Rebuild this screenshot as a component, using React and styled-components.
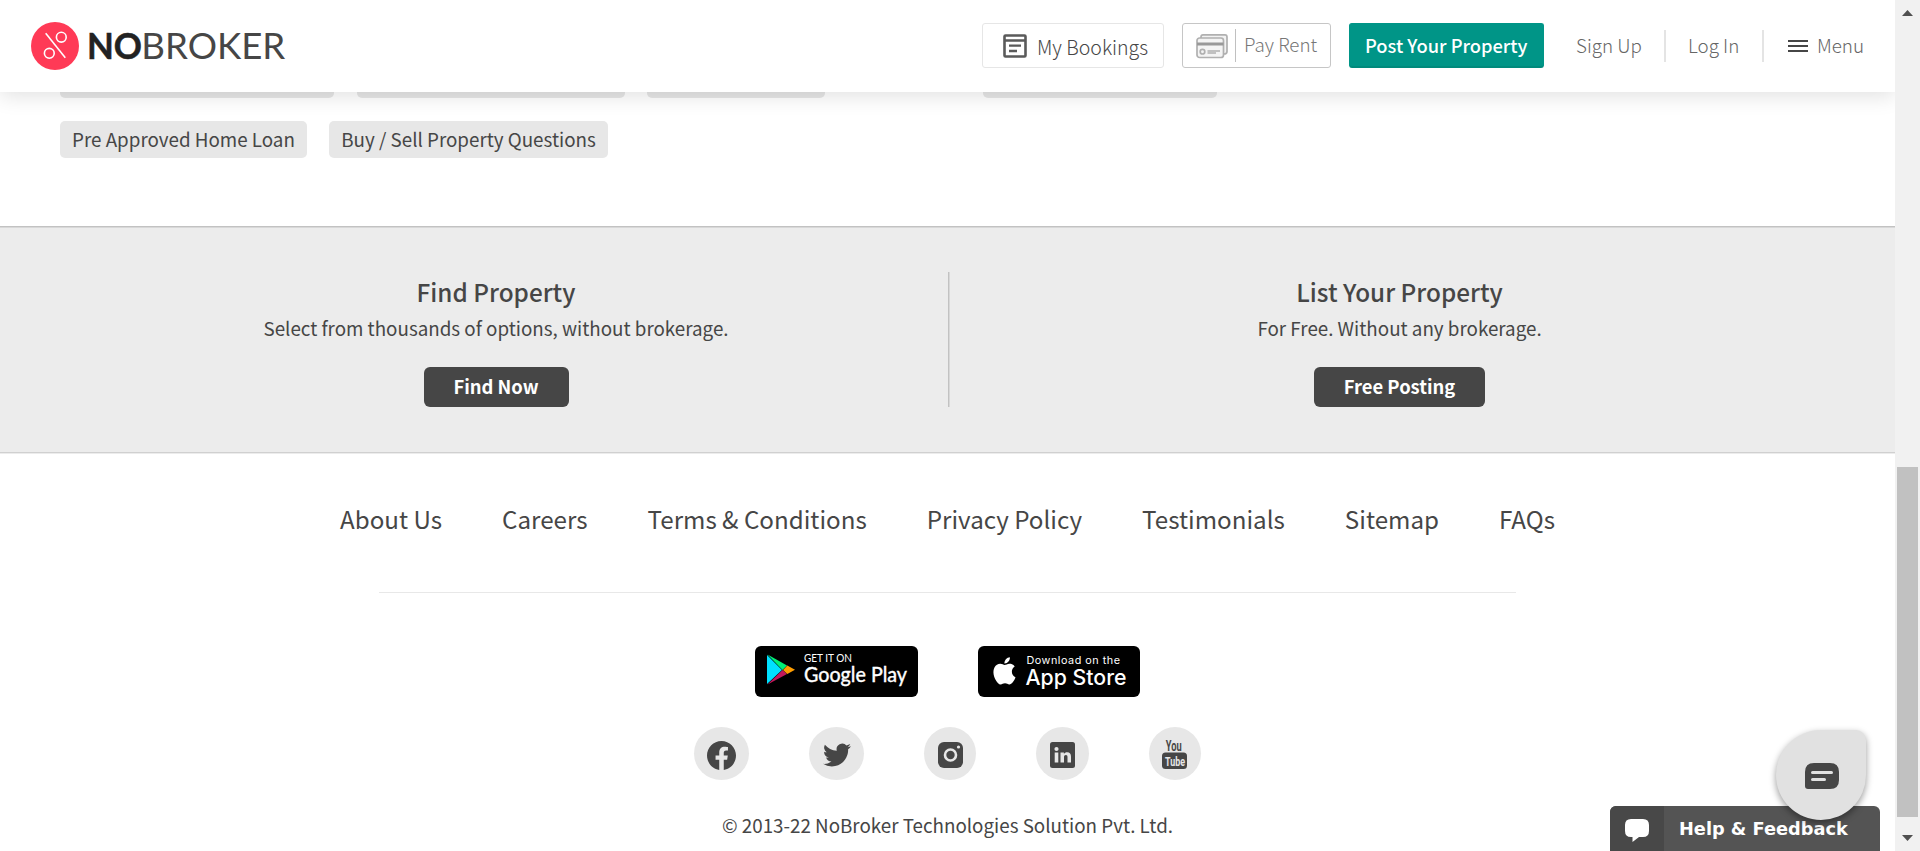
import React from "react";
import styled, { createGlobalStyle, css } from "styled-components";

const sans = '"Noto Sans CJK SC", "Noto Sans", sans-serif';

const GlobalStyle = createGlobalStyle`
  * { box-sizing: border-box; }
  body { margin: 0; background: #fff; color: #464646; font-family: ${sans}; overflow: hidden; }
  a { color: inherit; text-decoration: none; }
  button { font-family: inherit; border: 0; padding: 0; margin: 0; cursor: pointer; }
`;

const Page = styled.div`
  display: flex;
  width: 1920px;
  height: 851px;
  overflow: hidden;
`;
const Main = styled.main`
  position: relative;
  width: 1895px;
  height: 851px;
  overflow: hidden;
`;

/* header */
const Header = styled.header`
  position: absolute;
  inset: 0 0 auto 0;
  z-index: 5;
  height: 92px;
  background: #fff;
  box-shadow: 0 4px 20px rgba(0, 0, 0, 0.12);
  display: flex;
  align-items: flex-start;
  padding: 22px 31px 0;
`;
const Logo = styled.svg`
  display: block;
  margin-right: auto;
`;
const HeaderButton = styled.button`
  display: flex;
  align-items: center;
  height: 45px;
  width: ${(p) => p.$width}px;
  margin: 1px 18px 0 0;
  padding-left: ${(p) => p.$pad}px;
  border: 1px solid ${(p) => p.$border};
  border-radius: 3px;
  background: #fff;
  color: ${(p) => p.$color || "#464646"};
  white-space: nowrap;
  ${(p) =>
    p.$primary &&
    css`
      background: #009587;
      border-color: #009587;
      border-bottom: 2px solid #008a7c;
      color: #fff;
    `}
`;
const HeaderText = styled.span`
  font-size: ${(p) => p.$size || 18.8}px;
  font-weight: ${(p) => p.$weight || 300};
  line-height: 26px;
  margin-top: ${(p) => p.$drop || 0}px;
  margin-left: ${(p) => p.$gap || 0}px;
  white-space: nowrap;
`;
const PayDivider = styled.span`
  width: 1px;
  height: 33px;
  margin: 0 8px 0 7px;
  background: #c0c0c0;
`;
const HeaderLink = styled.a`
  display: flex;
  align-items: center;
  height: 32px;
  margin-top: 8px;
  width: ${(p) => p.$width}px;
  padding-left: ${(p) => p.$pad}px;
  border-right: ${(p) => (p.$last ? "0" : "2px solid #e4e4e4")};
  color: #666;
`;
const Burger = styled.span`
  display: flex;
  flex-direction: column;
  gap: 3px;
  width: 22px;
  margin-right: 9px;
  i { height: 2px; background: #464646; }
`;

/* chips */
const Chips = styled.section`
  height: 226px;
  padding: 61px 60px 0;
`;
const ChipRow = styled.div`
  display: flex;
  gap: 22px;
  margin-bottom: 23px;
`;
const Chip = styled.a`
  width: ${(p) => p.$width}px;
  margin-left: ${(p) => p.$shift || 0}px;
  height: 37px;
  border-radius: 5px;
  background: #e7e7e7;
  font-size: 18.8px;
  line-height: 35px;
  text-align: center;
  white-space: nowrap;
`;

/* call to action band */
const Band = styled.section`
  display: flex;
  align-items: flex-start;
  height: 227px;
  margin-bottom: 1px;
  padding-top: 45px;
  background: #ececec;
  border-top: 1px solid #c2c2c2;
  border-bottom: 1px solid #d0d0d0;
  box-shadow: inset 0 1px #d8d8d8, 0 1px #ececec;
`;
const BandCell = styled.div`
  display: flex;
  flex-direction: column;
  align-items: center;
  width: ${(p) => p.$width}px;
  height: 135px;
  padding-left: ${(p) => p.$pad || 0}px;
  ${(p) =>
    p.$divided &&
    css`
      border-right: 1px solid #c2c2c2;
      box-shadow: 1px 0 #d8d8d8;
    `}
`;
const BandTitle = styled.h3`
  margin: 3px 0 0;
  font-size: 24.3px;
  font-weight: 500;
  line-height: 34px;
`;
const BandText = styled.p`
  margin: 4px 0 0;
  font-size: 18.8px;
  line-height: 30px;
`;
const DarkButton = styled.button`
  width: ${(p) => p.$width}px;
  height: 40px;
  margin-top: 24px;
  border-radius: 6px;
  background: #464646;
  color: #fff;
  font-size: 18.4px;
  font-weight: 700;
  line-height: 37px;
  padding-bottom: 2px;
`;

/* footer */
const Footer = styled.footer`
  display: flex;
  flex-direction: column;
  align-items: center;
`;
const FooterNav = styled.nav`
  display: flex;
  gap: 60px;
  height: 138px;
  padding-top: 47px;
  font-size: 24.17px;
  line-height: 36px;
  white-space: nowrap;
`;
const Rule = styled.hr`
  width: 1137px;
  height: 1px;
  margin: 0;
  border: 0;
  background: #e8e8e8;
`;
const Badges = styled.div`
  display: flex;
  gap: 60px;
  margin-top: 53px;
  svg { display: block; }
`;
const Socials = styled.div`
  display: flex;
  gap: 60px;
  margin-top: 30px;
`;
const SocialLink = styled.a`
  display: flex;
  justify-content: center;
  align-items: center;
  width: ${(p) => p.$width}px;
  height: 53px;
  padding-top: ${(p) => p.$drop}px;
  border-radius: 50%;
  background: #e7e7e7;
  svg { display: block; overflow: visible; }
`;
const Copyright = styled.p`
  margin: 30px 0 0;
  font-size: 18.8px;
  line-height: 30px;
  white-space: nowrap;
`;

/* floating widgets */
const HelpBar = styled.div`
  position: absolute;
  left: 1610px;
  bottom: 0;
  z-index: 6;
  display: flex;
  width: 270px;
  height: 45px;
  border-radius: 6px 6px 0 0;
  overflow: hidden;
  background: #545454;
  color: #fff;
  font: 700 17.75px/46px "DejaVu Sans", sans-serif;
`;
const HelpIcon = styled.span`
  width: 54px;
  height: 45px;
  margin-right: 15px;
  background: #484848;
`;
const ChatBubble = styled.button`
  position: absolute;
  left: 1776px;
  top: 730px;
  z-index: 7;
  display: flex;
  align-items: center;
  justify-content: center;
  width: 90px;
  height: 90px;
  border-radius: 45px 10px 45px 45px;
  background: #e1e1e1;
  box-shadow: 0 3px 7px rgba(0, 0, 0, 0.4);
  svg { margin: 2px 0 0 2px; }
`;

/* scrollbar */
const ScrollTrack = styled.aside`
  display: flex;
  flex-direction: column;
  align-items: center;
  width: 25px;
  height: 851px;
  background: #f1f1f1;
  svg { display: block; }
`;
const ScrollThumb = styled.div`
  width: 21px;
  height: 350px;
  margin-top: 441px;
  background: #c1c1c1;
`;

const topChips = [
  { width: 274 },
  { width: 268, shift: 1 },
  { width: 178 },
  { width: 234, shift: 136 },
];
const links = ["About Us", "Careers", "Terms & Conditions", "Privacy Policy", "Testimonials", "Sitemap", "FAQs"];

const BrandLogo = () => (
  <Logo width="256" height="50" viewBox="0 0 256 50">
    <circle cx="24" cy="24" r="24" fill="#ff3a56" />
    <g fill="none" stroke="#fff" strokeWidth="1.6">
      <path d="M14.700 11.300 34.300 35.700" />
      <circle cx="30.300" cy="15.200" r="4.900" />
      <circle cx="18.300" cy="31.300" r="4.900" />
    </g>
    <text x="56" y="36.700" fontFamily="Lato" fontWeight="700" fontSize="35.800" fill="#222" stroke="#222" strokeWidth=".5" textLength="55" lengthAdjust="spacingAndGlyphs">NO</text>
    <text x="110.300" y="36.700" fontFamily="Lato" fontWeight="400" fontSize="35.800" fill="#464646" textLength="144" lengthAdjust="spacingAndGlyphs">BROKER</text>
  </Logo>
);

const BookingIcon = () => (
  <svg width="24" height="24" viewBox="0 0 24 24">
    <rect x="1.500" y="1.500" width="21" height="21" rx="1" fill="none" stroke="#5a5a5a" strokeWidth="2.600" />
    <path d="M1 6.500H23M6 11.700H18M6 17H14" stroke="#5a5a5a" strokeWidth="2.300" />
  </svg>
);

const CardsIcon = () => (
  <svg width="32" height="26" viewBox="0 0 32 26" fill="none" stroke="#b0b0b0" strokeWidth="1.700">
    <path d="M5 5V4Q5 1.800 7 1.800H29Q31 1.800 31 4V18.500Q31 21 28 21" fill="#f2f2f2" />
    <rect x="1" y="5" width="26.500" height="19.500" rx="2.500" fill="#f4f4f4" />
    <path d="M1 11H27.500" strokeWidth="3" stroke="#999" />
    <circle cx="6.500" cy="18.700" r="2.300" />
    <path d="M11.500 18H24M11.500 20H20" strokeWidth="1.600" />
  </svg>
);

const GooglePlay = () => (
  <svg width="163" height="51" viewBox="0 0 163 51">
    <rect width="163" height="51" rx="6" fill="#000" />
    <path d="M12 9V38L27 24Z" fill="#00e0ff" />
    <path d="M12.500 8.500 32 19.500 27.500 24Z" fill="#00f076" />
    <path d="M12.500 38.500 32 28 27.500 24Z" fill="#c2185b" />
    <path d="M32.300 19.500 40 23.700 32.300 28 28 24Z" fill="#ff9d00" />
    <g fill="#fff" fontFamily="Lato" fontWeight="400">
      <text x="49" y="15.700" fontSize="11" textLength="48" lengthAdjust="spacingAndGlyphs">GET IT ON</text>
      <text x="49" y="35.700" fontSize="20.500" stroke="#fff" strokeWidth=".4" textLength="103" lengthAdjust="spacingAndGlyphs">Google Play</text>
    </g>
  </svg>
);

const AppStore = () => (
  <svg width="162" height="51" viewBox="0 0 162 51">
    <rect width="162" height="51" rx="6" fill="#000" />
    <path transform="translate(10.200 8.500) scale(1.360)" fill="#fff" d="M18.710 19.500c-.830 1.240-1.710 2.450-3.050 2.470-1.340.030-1.770-.790-3.290-.790-1.530 0-2 .770-3.270.820-1.310.050-2.300-1.320-3.140-2.530C4.250 17 2.940 12.450 4.700 9.390c.870-1.520 2.430-2.480 4.120-2.510 1.280-.020 2.500.870 3.290.870.780 0 2.260-1.070 3.810-.910.650.030 2.470.260 3.640 1.980-.090.060-2.170 1.280-2.150 3.810.030 3.020 2.650 4.030 2.680 4.040-.030.070-.420 1.440-1.380 2.830M13 3.500c.730-.830 1.940-1.460 2.940-1.500.130 1.170-.340 2.350-1.040 3.190-.690.850-1.830 1.510-2.950 1.420-.150-1.150.410-2.350 1.050-3.110z" />
    <g fill="#fff" fontFamily="Inter">
      <text x="48.500" y="18" fontSize="10.800" textLength="93.500">Download on the</text>
      <text x="47.500" y="38.500" fontSize="21" fontWeight="500" textLength="101" lengthAdjust="spacingAndGlyphs">App Store</text>
    </g>
  </svg>
);

const Facebook = () => (
  <svg width="29" height="29" viewBox="0 0 24 24" fill="#464646">
    <path d="M24 12.073C24 5.400 18.630 0 12 0S0 5.400 0 12.073C0 18.100 4.390 23.100 10.125 24v-8.437H7.078v-3.490h3.047v-2.660c0-3.025 1.792-4.697 4.533-4.697 1.312 0 2.686.236 2.686.236v2.971H15.830c-1.491 0-1.956.930-1.956 1.886v2.264h3.328l-.532 3.490h-2.796V24C19.612 23.100 24 18.100 24 12.073z" />
  </svg>
);
const Twitter = () => (
  <svg width="28" height="28" viewBox="0 0 24 24" fill="#464646">
    <path d="M23.950 4.570a10 10 0 0 1-2.820.770 4.960 4.960 0 0 0 2.160-2.720c-.950.550-2 .950-3.130 1.180a4.920 4.920 0 0 0-8.380 4.480C7.690 8.090 4.070 6.130 1.640 3.160a4.920 4.920 0 0 0 1.520 6.570 4.900 4.900 0 0 1-2.230-.610v.060a4.920 4.920 0 0 0 3.950 4.830 5 5 0 0 1-2.210.080 4.940 4.940 0 0 0 4.600 3.420A9.870 9.870 0 0 1 0 19.540a13.990 13.990 0 0 0 7.550 2.210c9.050 0 14-7.500 14-13.980 0-.210 0-.420-.020-.630a9.940 9.940 0 0 0 2.420-2.570z" />
  </svg>
);
const Instagram = () => (
  <svg width="25" height="26" viewBox="0 0 25 26">
    <rect width="25" height="26" rx="6" fill="#464646" />
    <circle cx="12.500" cy="13" r="5.500" fill="none" stroke="#e7e7e7" strokeWidth="2.600" />
    <circle cx="20.500" cy="5" r="1.600" fill="#e7e7e7" />
  </svg>
);
const LinkedIn = () => (
  <svg width="25" height="26" viewBox="0 0 25 26">
    <rect width="25" height="26" rx="2.500" fill="#464646" />
    <circle cx="6.500" cy="7" r="2.100" fill="#e7e7e7" />
    <path d="M4.700 10.500h3.600V20.500H4.700zM10.500 10.500h3.400v1.400c.700-1.100 1.800-1.700 3.200-1.700 2.800 0 3.900 1.700 3.900 4.500v5.800h-3.500v-5.300c0-1.300-.400-2.200-1.600-2.200-1.300 0-1.900.900-1.900 2.200v5.300h-3.500z" fill="#e7e7e7" />
  </svg>
);
const YouTube = () => (
  <svg width="26" height="30" viewBox="0 0 26 30">
    <rect x="0" y="12.500" width="25" height="16.500" rx="3.500" fill="#464646" />
    <g fontFamily="Roboto" fontWeight="700">
      <text transform="translate(3.800 11.300) scale(.62 1)" fontSize="15" fill="#464646">You</text>
      <text transform="translate(3 25.800) scale(.66 1)" fontSize="13.500" fill="#e7e7e7">Tube</text>
    </g>
  </svg>
);

const Arrow = ({ up }) => (
  <svg width="25" height="26" viewBox="0 0 25 26">
    <path d={up ? "M7 16 12.500 10 18 16Z" : "M7 18 12.500 24 18 18Z"} fill="#505050" />
  </svg>
);

export default function App() {
  return (
    <Page>
      <GlobalStyle />
      <Main>
        <Header>
          <BrandLogo />
          <HeaderButton $width={182} $pad={20} $border="#e6e6e6">
            <BookingIcon />
            <HeaderText $drop={2} $gap={10} $size={19.5}>My Bookings</HeaderText>
          </HeaderButton>
          <HeaderButton $width={149} $pad={13} $border="#c6c6c6" $color="#777">
            <CardsIcon />
            <PayDivider />
            <HeaderText $drop={-3}>Pay Rent</HeaderText>
          </HeaderButton>
          <HeaderButton $width={195} $pad={15} $primary>
            <HeaderText $weight={500} $size={18.3}>Post Your Property</HeaderText>
          </HeaderButton>
          <HeaderLink $width={104} $pad={14}><HeaderText $drop={-2}>Sign Up</HeaderText></HeaderLink>
          <HeaderLink $width={98} $pad={22}><HeaderText $drop={-2}>Log In</HeaderText></HeaderLink>
          <HeaderLink $width={100} $pad={24} $last>
            <Burger><i /><i /><i /></Burger>
            <HeaderText $drop={-2}>Menu</HeaderText>
          </HeaderLink>
        </Header>

        <Chips>
          <ChipRow>
            {topChips.map((c, i) => <Chip key={i} $width={c.width} $shift={c.shift} />)}
          </ChipRow>
          <ChipRow>
            <Chip $width={247}>Pre Approved Home Loan</Chip>
            <Chip $width={279}>Buy / Sell Property Questions</Chip>
          </ChipRow>
        </Chips>

        <Band>
          <BandCell $width={949} $pad={44} $divided>
            <BandTitle>Find Property</BandTitle>
            <BandText>Select from thousands of options, without brokerage.</BandText>
            <DarkButton $width={145}>Find Now</DarkButton>
          </BandCell>
          <BandCell $width={901}>
            <BandTitle>List Your Property</BandTitle>
            <BandText>For Free. Without any brokerage.</BandText>
            <DarkButton $width={171}>Free Posting</DarkButton>
          </BandCell>
        </Band>

        <Footer>
          <FooterNav>{links.map((l) => <a key={l}>{l}</a>)}</FooterNav>
          <Rule />
          <Badges><GooglePlay /><AppStore /></Badges>
          <Socials>
            <SocialLink $width={55} $drop={3}><Facebook /></SocialLink>
            <SocialLink $width={55} $drop={3}><Twitter /></SocialLink>
            <SocialLink $width={52} $drop={3}><Instagram /></SocialLink>
            <SocialLink $width={53} $drop={3}><LinkedIn /></SocialLink>
            <SocialLink $width={52} $drop={3}><YouTube /></SocialLink>
          </Socials>
          <Copyright>© 2013-22 NoBroker Technologies Solution Pvt. Ltd.</Copyright>
        </Footer>

        <HelpBar>
          <HelpIcon>
            <svg width="54" height="45" viewBox="0 0 54 45">
              <path d="M21 13H33Q39 13 39 19V25Q39 31 33 31H29L22.500 36V31H21Q15 31 15 25V19Q15 13 21 13Z" fill="#fff" />
            </svg>
          </HelpIcon>
          Help &amp; Feedback
        </HelpBar>
        <ChatBubble>
          <svg width="34" height="26" viewBox="0 0 34 26">
            <path d="M9 0H25Q34 0 34 9V17Q34 26 25 26H3Q0 26 0 23V9Q0 0 9 0Z" fill="#464646" />
            <path d="M7.500 9.500H26.500M7.500 16.500H19.500" stroke="#e1e1e1" strokeWidth="3" strokeLinecap="round" />
          </svg>
        </ChatBubble>
      </Main>
      <ScrollTrack>
        <Arrow up />
        <ScrollThumb />
        <Arrow />
      </ScrollTrack>
    </Page>
  );
}
